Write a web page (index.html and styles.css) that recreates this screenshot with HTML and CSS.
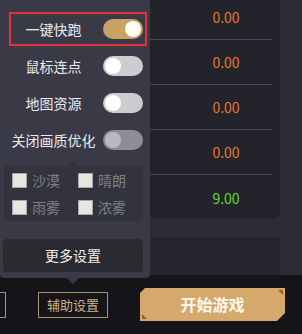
FILE: index.html
```html
<!DOCTYPE html>
<html lang="zh-CN">
<head>
<meta charset="utf-8">
<title>辅助设置</title>
<link rel="stylesheet" href="styles.css">
</head>
<body>
<div class="screen">
  <div class="main">
    <div class="table-card">
      <div class="trow"><span class="tname"></span><span class="val orange">0.00</span></div>
      <div class="trow"><span class="tname"></span><span class="val orange">0.00</span></div>
      <div class="trow"><span class="tname"></span><span class="val orange">0.00</span></div>
      <div class="trow"><span class="tname"></span><span class="val orange">0.00</span></div>
      <div class="trow last"><span class="tname"></span><span class="val green">9.00</span></div>
    </div>
    <div class="card2"></div>
  </div>
  <div class="bottombar">
    <div class="btn-outline partial"></div>
    <div class="btn-outline">辅助设置</div>
    <div class="start"><span class="corner tr"></span><span class="corner bl"></span>开始游戏</div>
  </div>

  <div class="popup">
    <div class="srow highlight"><span class="slabel">一键快跑</span><span class="toggle on"><span class="knob"></span></span></div>
    <div class="srow"><span class="slabel">鼠标连点</span><span class="toggle off"><span class="knob"></span></span></div>
    <div class="srow"><span class="slabel">地图资源</span><span class="toggle off"><span class="knob"></span></span></div>
    <div class="srow"><span class="slabel">关闭画质优化</span><span class="toggle disabled"><span class="knob"></span></span></div>
    <div class="weather">
      <label class="wopt"><span class="cb"></span><span class="wlabel">沙漠</span></label>
      <label class="wopt"><span class="cb"></span><span class="wlabel">晴朗</span></label>
      <label class="wopt"><span class="cb"></span><span class="wlabel">雨雾</span></label>
      <label class="wopt"><span class="cb"></span><span class="wlabel">浓雾</span></label>
    </div>
    <div class="more">更多设置</div>
  </div>
</div>
</body>
</html>
```

FILE: styles.css
```css
* { box-sizing: border-box; }
html, body { margin: 0; padding: 0; }
body {
  width: 302px;
  height: 334px;
  overflow: hidden;
  background: #2b2c36;
  font-family: "Noto Sans CJK SC", "Microsoft YaHei", sans-serif;
}
.screen {
  position: relative;
  width: 302px;
  height: 334px;
  display: flex;
  flex-direction: column;
}
.main {
  height: 275px;
  display: flex;
  flex-direction: column;
}
.table-card {
  width: 280px;
  height: 218px;
  background: #22232b;
  border-radius: 0 0 6px 0;
  padding: 0 8px;
  overflow: hidden;
  display: flex;
  flex-direction: column;
}
.trow {
  flex: none;
  height: 45px;
  display: flex;
  align-items: center;
  border-bottom: 1px solid #4a4b53;
}
.trow:first-child { margin-top: -5px; }
.trow.last { border-bottom: none; }
.tname { flex: 1; }
.val {
  width: 92px;
  text-align: center;
  font-size: 14px;
  line-height: 16px;
}
.orange { color: #e8782c; }
.green { color: #5fdc2a; }
.card2 {
  width: 280px;
  height: 38px;
  margin-top: 19px;
  background: #24252d;
}
.bottombar {
  height: 59px;
  background: #141419;
  display: flex;
  align-items: center;
  gap: 32px;
}
.btn-outline {
  flex: none;
  width: 70px;
  height: 26px;
  border: 1px solid #a89371;
  color: #cdb385;
  font-size: 13px;
  line-height: 24px;
  text-align: center;
}
.btn-outline.partial { margin-left: -64px; }
.start {
  position: relative;
  flex: none;
  width: 145px;
  height: 33px;
  background: #d4a96b;
  clip-path: polygon(5px 0, 100% 0, 100% calc(100% - 8px), calc(100% - 8px) 100%, 0 100%, 0 5px);
  color: #fff9ee;
  font-size: 16px;
  font-weight: bold;
  line-height: 33px;
  text-align: center;
}
.corner {
  position: absolute;
  width: 0;
  height: 0;
}
.corner.tr {
  top: 2px;
  right: 2px;
  border-top: 5px solid #8a6428;
  border-left: 5px solid transparent;
}
.corner.bl {
  bottom: 2px;
  left: 2px;
  border-bottom: 5px solid #8a6428;
  border-right: 5px solid transparent;
}

/* popup */
.popup {
  position: absolute;
  left: 0;
  top: 0;
  width: 150px;
  height: 278px;
  background: #3a3a47;
  border-radius: 0 0 4px 4px;
  padding-top: 12px;
  display: flex;
  flex-direction: column;
}
.popup::after {
  content: "";
  position: absolute;
  left: 67px;
  bottom: -6px;
  border-top: 6px solid #3a3a47;
  border-left: 6px solid transparent;
  border-right: 6px solid transparent;
}
.srow {
  height: 34px;
  margin: 0 3px 0 9px;
  border: 2px solid transparent;
  display: flex;
  align-items: center;
  padding-right: 2px;
}
.srow + .srow { margin-top: 3px; }
.srow.highlight { border-color: #e2333b; }
.slabel {
  width: 85px;
  text-align: center;
  color: #ececf0;
  font-size: 14px;
  line-height: 18px;
  white-space: nowrap;
}
.toggle {
  position: relative;
  margin-left: auto;
  width: 40px;
  height: 20px;
  border-radius: 10px;
}
.knob {
  position: absolute;
  top: 2px;
  width: 16px;
  height: 16px;
  border-radius: 50%;
  background: #fffdf6;
}
.toggle.on { background: #c9a264; }
.toggle.on .knob { right: 2px; }
.toggle.off { background: #cdcdd1; }
.toggle.off .knob { left: 2px; background: #ffffff; }
.toggle.disabled { background: #8d8d97; }
.toggle.disabled .knob { left: 2px; background: #b9b9c2; }

.weather {
  position: relative;
  margin: 9px 7px 0 4px;
  height: 55px;
  background: #33333e;
  padding: 7px 0 0 8px;
  display: grid;
  grid-template-columns: 66px 66px;
  grid-auto-rows: 15px;
  row-gap: 12px;
}
.weather::before {
  content: "";
  position: absolute;
  left: 64px;
  top: -5px;
  border-bottom: 5px solid #33333e;
  border-left: 5px solid transparent;
  border-right: 5px solid transparent;
}
.wopt {
  display: flex;
  align-items: center;
  gap: 5px;
}
.cb {
  width: 15px;
  height: 15px;
  background: #e6e6de;
  border: 1px solid #a9a9ad;
}
.wlabel {
  color: #7e7e89;
  font-size: 14px;
  line-height: 15px;
}
.more {
  margin: 18px 7px 0 3px;
  height: 33px;
  background: #2a2a31;
  border-radius: 4px;
  color: #f2f2f2;
  font-size: 14px;
  line-height: 33px;
  text-align: center;
}
```
